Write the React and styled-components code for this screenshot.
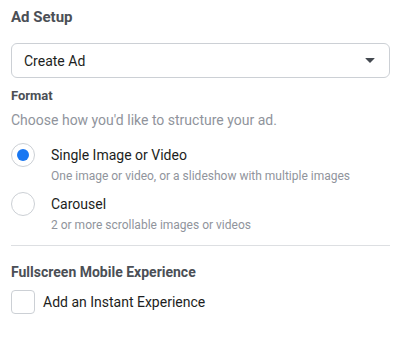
import React, { useState } from 'react'
import styled, { createGlobalStyle } from 'styled-components'

const GlobalStyle = createGlobalStyle`
    body {
        margin: 0;
        background: #ffffff;
        font-family: Roboto, "Liberation Sans", Arial, sans-serif;
    }
`

const Container = styled.div`
    width: 403px;
    height: 345px;
    padding: 0 13px 0 11px;
    box-sizing: border-box;
    display: flex;
    flex-direction: column;
`
const Heading = styled.div`
    font-size: 15px;
    font-weight: 700;
    color: #4b4f56;
    line-height: 18px;
    margin-top: 8px;
`
const Select = styled.div`
    margin-top: 17px;
    height: 35px;
    border: 1px solid #ccd0d5;
    border-radius: 6px;
    box-sizing: border-box;
    display: flex;
    align-items: center;
    justify-content: space-between;
    padding: 0 14px 0 12px;
    font-size: 14px;
    color: #1c1e21;
    cursor: pointer;
`
const Arrow = styled.span`
    width: 0;
    height: 0;
    border-left: 5.5px solid transparent;
    border-right: 5.5px solid transparent;
    border-top: 5.5px solid #444950;
    border-radius: 1px;
`
const SectionTitle = styled.div`
    font-size: ${props => props.size}px;
    font-weight: 700;
    color: #4b4f56;
    line-height: 16px;
    margin-top: ${props => props.top}px;
`
const Hint = styled.div`
    font-size: 14px;
    color: #90949c;
    line-height: 18px;
    margin-top: 7px;
`
const OptionList = styled.div`
    display: flex;
    flex-direction: column;
    gap: 8px;
    margin-top: 14px;
`
const Option = styled.label`
    display: flex;
    gap: 16px;
    cursor: pointer;
`
const Radio = styled.span`
    width: 24px;
    height: 24px;
    border-radius: 50%;
    border: 1px solid #ccd0d5;
    box-sizing: border-box;
    display: flex;
    align-items: center;
    justify-content: center;
    flex-shrink: 0;

    &::after {
        content: '';
        width: 12px;
        height: 12px;
        border-radius: 50%;
        background: ${props => props.checked ? '#1877f2' : 'transparent'};
    }
`
const OptionText = styled.div`
    display: flex;
    flex-direction: column;
    gap: 4px;
    padding-top: 3px;
`
const OptionLabel = styled.span`
    font-size: 14px;
    color: #1c1e21;
    line-height: 18px;
`
const OptionDesc = styled.span`
    font-size: 12px;
    color: #90949c;
    line-height: 16px;
`
const Divider = styled.div`
    height: 1px;
    background: #dddfe2;
    margin-top: 12px;
`
const CheckRow = styled.label`
    display: flex;
    align-items: center;
    gap: 8px;
    margin-top: 10px;
    cursor: pointer;
`
const Checkbox = styled.span`
    width: 24px;
    height: 24px;
    border: 1px solid #ccd0d5;
    border-radius: 4px;
    box-sizing: border-box;
`
const CheckLabel = styled.span`
    font-size: 14px;
    color: #1c1e21;
`

const formats = [
    { id: 'single', label: 'Single Image or Video', desc: 'One image or video, or a slideshow with multiple images' },
    { id: 'carousel', label: 'Carousel', desc: '2 or more scrollable images or videos' },
]

const App = () => {
    const [format, setFormat] = useState('single')

    return (
        <Container>
            <GlobalStyle />
            <Heading>Ad Setup</Heading>
            <Select>
                Create Ad
                <Arrow />
            </Select>
            <SectionTitle size={13} top={10}>Format</SectionTitle>
            <Hint>Choose how you'd like to structure your ad.</Hint>
            <OptionList>
                {formats.map((f) => (
                    <Option key={f.id} onClick={() => setFormat(f.id)}>
                        <Radio checked={format === f.id} />
                        <OptionText>
                            <OptionLabel>{f.label}</OptionLabel>
                            <OptionDesc>{f.desc}</OptionDesc>
                        </OptionText>
                    </Option>
                ))}
            </OptionList>
            <Divider />
            <SectionTitle size={14} top={18}>Fullscreen Mobile Experience</SectionTitle>
            <CheckRow>
                <Checkbox />
                <CheckLabel>Add an Instant Experience</CheckLabel>
            </CheckRow>
        </Container>
    )
}

export default App
